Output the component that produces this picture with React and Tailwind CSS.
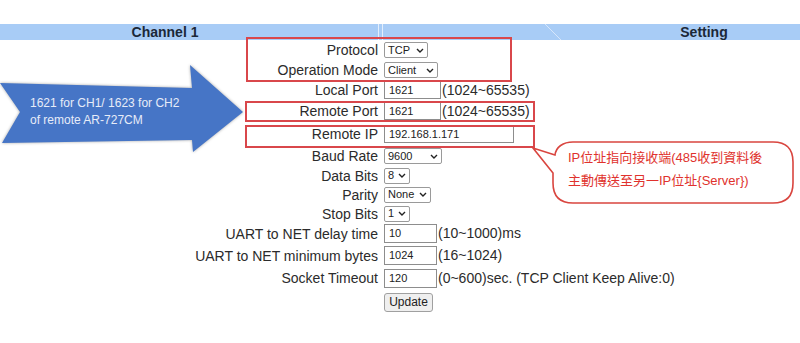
import { } from 'react';

const FONT = { fontFamily: '"Liberation Sans", Arial, sans-serif' };
const CJK = { fontFamily: '"Liberation Sans", "Noto Sans CJK TC", sans-serif' };

function Chevron() {
  return (
    <svg width="8" height="5" viewBox="0 0 8 5" className="shrink-0">
      <path d="M1 1 L4 4 L7 1" fill="none" stroke="#222" strokeWidth="1.4" />
    </svg>
  );
}

function Select({ value, width }) {
  return (
    <div
      className="h-[16px] border border-[#9a9a9a] rounded-[2px] bg-white flex items-center justify-between pl-[3px] pr-[3px] text-[11px] text-[#222]"
      style={{ width }}
    >
      <span className="leading-none">{value}</span>
      <Chevron />
    </div>
  );
}

function TextBox({ value, width, height = 'h-[18px]' }) {
  return (
    <div
      className={`${height} border border-[#8d8d8d] bg-white flex items-center pl-[4px] text-[11px] text-[#222]`}
      style={{ width }}
    >
      {value}
    </div>
  );
}

function Row({ label, h, children }) {
  return (
    <div className={`flex items-center ${h}`}>
      <div className="w-[378px] text-right text-[14px] text-[#2b2b2b] leading-none">{label}</div>
      <div className="ml-[6px] flex items-center text-[14px] text-[#2b2b2b]">{children}</div>
    </div>
  );
}

export default function App() {
  return (
    <div className="relative w-[800px] h-[343px] bg-white overflow-hidden pt-[24px]" style={FONT}>
      {/* header bar */}
      <div className="relative flex h-[16px] bg-[#a8ccf6] text-[14px] font-bold text-[#1b2838] leading-[16px]">
        <div className="w-[378px] text-center pr-[48px]">Channel 1</div>
        <div className="w-[1px] bg-[#e3eefc]" />
        <div className="w-[3px]" />
        <div className="w-[1px] bg-[#e3eefc]" />
        <div className="flex-1 text-center pl-[225px]">Setting</div>
        {/* faint scan artifact */}
        <svg className="absolute left-[544px] top-0" width="18" height="16" viewBox="0 0 18 16">
          <line x1="1" y1="0" x2="17" y2="16" stroke="#d6e6fb" strokeWidth="1" />
        </svg>
      </div>

      {/* form */}
      <div className="flex flex-col">
        <Row label="Protocol" h="h-[20px]">
          <Select value="TCP" width={44} />
        </Row>
        <Row label="Operation Mode" h="h-[20px]">
          <Select value="Client" width={54} />
        </Row>
        <Row label="Local Port" h="h-[20px]">
          <TextBox value="1621" width={57} />
          <span className="ml-[1px]">(1024~65535)</span>
        </Row>
        <Row label="Remote Port" h="h-[22px]">
          <TextBox value="1621" width={57} />
          <span className="ml-[1px]">(1024~65535)</span>
        </Row>
        <Row label="Remote IP" h="h-[24px]">
          <TextBox value="192.168.1.171" width={130} height="h-[17px]" />
        </Row>
        <Row label="Baud Rate" h="h-[20px]">
          <Select value="9600" width={58} />
        </Row>
        <Row label="Data Bits" h="h-[19px]">
          <Select value="8" width={26} />
        </Row>
        <Row label="Parity" h="h-[19px]">
          <Select value="None" width={47} />
        </Row>
        <Row label="Stop Bits" h="h-[19px]">
          <Select value="1" width={26} />
        </Row>
        <Row label="UART to NET delay time" h="h-[21px]">
          <TextBox value="10" width={53} height="h-[19px]" />
          <span className="ml-[1px]">(10~1000)ms</span>
        </Row>
        <Row label="UART to NET minimum bytes" h="h-[23px]">
          <TextBox value="1024" width={53} height="h-[19px]" />
          <span className="ml-[1px]">(16~1024)</span>
        </Row>
        <Row label="Socket Timeout" h="h-[22px]">
          <TextBox value="120" width={53} height="h-[19px]" />
          <span className="ml-[1px]">(0~600)sec. (TCP Client Keep Alive:0)</span>
        </Row>
        <Row label="" h="h-[26px]">
          <button className="h-[19px] w-[49px] border border-[#a0a0a0] rounded-[3px] bg-[#efefef] text-[12px] text-[#222] leading-none">
            Update
          </button>
        </Row>
      </div>

      {/* red annotation boxes */}
      <div className="absolute left-[246px] top-[37px] w-[266px] h-[45px] border-2 border-[#d9474b]" />
      <div className="absolute left-[245px] top-[101px] w-[290px] h-[21px] border-2 border-[#d9474b]" />
      <div className="absolute left-[245px] top-[125px] w-[290px] h-[23px] border-2 border-[#d9474b]" />

      {/* blue arrow */}
      <svg
        className="absolute left-0 top-[60px] drop-shadow-[0_0_1.5px_rgba(0,0,0,0.35)]"
        width="250"
        height="95"
        viewBox="0 0 250 95"
      >
        <polygon points="0,23 192,28 190,5 243,52 193,92 192,80 2,83 20,52" fill="#4675c6" />
      </svg>
      <div className="absolute left-[30px] top-[95px] text-[12px] leading-[17px] text-[#e6ecf8]">
        <div>1621 for CH1/ 1623 for CH2</div>
        <div>of remote AR-727CM</div>
      </div>

      {/* speech bubble */}
      <svg className="absolute left-[525px] top-[138px]" width="275" height="70" viewBox="0 0 275 70">
        <path
          d="M30 17 L8 10 L28 35 L28 45 Q28 65 48 65 L248 65 Q268 65 268 45 L268 24 Q268 4 248 4 L48 4 C38 4 31 9 30 17 Z"
          fill="#fff"
          stroke="#d9453f"
          strokeWidth="1.6"
        />
      </svg>
      <div className="absolute left-[568px] top-[146px] text-[13px] leading-[23px] text-[#e0322d]" style={CJK}>
        <div>IP位址指向接收端(485收到資料後</div>
        <div>主動傳送至另一IP位址{'{'}Server{'}'})</div>
      </div>
    </div>
  );
}
